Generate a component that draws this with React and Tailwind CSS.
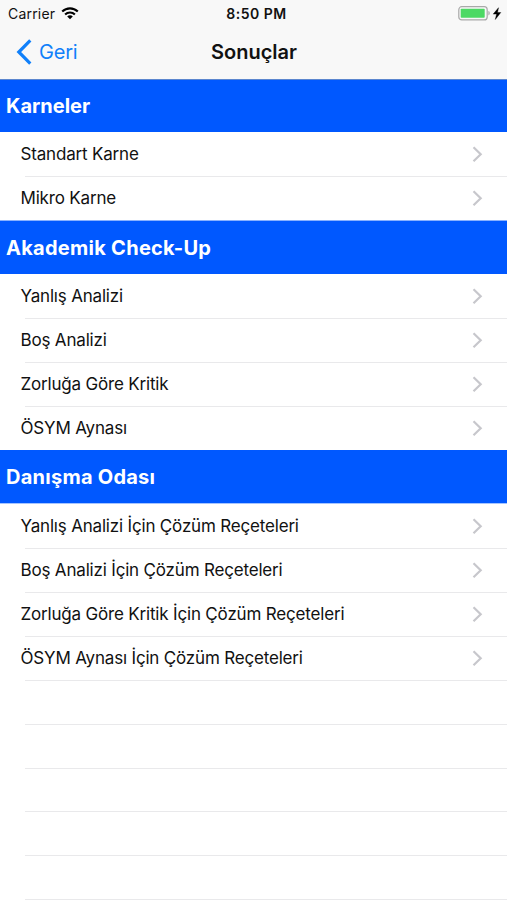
const sections = [
  {
    title: "Karneler",
    head: "h-[53px] border-t border-t-[#5b86cf]",
    heading: "tracking-normal",
    rows: ["Standart Karne", "Mikro Karne"],
  },
  {
    title: "Akademik Check-Up",
    head: "h-[54px] border-t border-t-[#8ab2ff]",
    heading: "tracking-[0.27px]",
    rows: ["Yanlış Analizi", "Boş Analizi", "Zorluğa Göre Kritik", "ÖSYM Aynası"],
  },
  {
    title: "Danışma Odası",
    head: "h-[54px] border-b border-b-[#a6c5ff]",
    heading: "tracking-[0.25px] pt-px",
    rows: [
      "Yanlış Analizi İçin Çözüm Reçeteleri",
      "Boş Analizi İçin Çözüm Reçeteleri",
      "Zorluğa Göre Kritik İçin Çözüm Reçeteleri",
      "ÖSYM Aynası İçin Çözüm Reçeteleri",
    ],
  },
];

function WifiIcon() {
  return (
    <svg className="h-[13px] w-[18px]" viewBox="0 0 18 13" fill="none" stroke="#000" strokeWidth="2.1">
      <path d="M1.2 4.6C5.6 .3 12.4 .3 16.8 4.6" />
      <path d="M4.1 7.5C6.9 4.8 11.1 4.8 13.9 7.5" />
      <path d="M6.2 9.4C7.8 7.8 10.2 7.8 11.8 9.4L9 12.2Z" fill="#000" stroke="none" />
    </svg>
  );
}

function BatteryIcon() {
  return (
    <svg className="h-[15px] w-[44px]" viewBox="0 0 44 15">
      <rect x=".8" y=".7" width="28.4" height="13.2" rx="3" fill="#f8f8f8" stroke="#a9a9a9" strokeWidth="1.2" />
      <rect x="2.7" y="2.7" width="24" height="9" rx=".8" fill="#4cd964" />
      <path d="M30.4 5.1C32.2 5.7 32.2 8.9 30.4 9.5Z" fill="#a9a9a9" />
      <path d="M40.5 1.7L35.2 8.1H38.6L37.3 13.5L42.8 6.5H39.5Z" fill="#000" stroke="#000" strokeWidth=".4" />
    </svg>
  );
}

function Chevron() {
  return (
    <svg className="h-[17px] w-[11px]" viewBox="0 0 11 17" fill="none" stroke="#c7c7cc" strokeWidth="2.2">
      <path d="M1.5 1.2L8.7 8.2L1.5 15.2" />
    </svg>
  );
}

function Row({ label, last }) {
  return (
    <div className="relative flex h-11 items-center justify-between pr-6 pl-[20.5px]">
      <span className="text-[17px] leading-5 tracking-[-0.18px] whitespace-nowrap">{label}</span>
      <Chevron />
      {!last && <div className="absolute right-0 bottom-[-1px] left-[25px] h-px bg-[#e9e9eb]" />}
    </div>
  );
}

function EmptyRow() {
  return (
    <div className="relative h-[43.8px]">
      <div className="absolute right-0 bottom-[-1px] left-[25px] h-px bg-[#e9e9eb]" />
    </div>
  );
}

export default function App() {
  return (
    <div className="h-[900px] w-[507px] overflow-hidden bg-white font-['Inter','Liberation_Sans',sans-serif] text-[#111]">
      <header className="h-[79px] bg-[#f8f8f8]">
        <div className="grid h-[27px] grid-cols-3 items-center pr-[5px] pl-2 text-[14px]">
          <div className="flex items-center gap-[6px]">
            <span className="tracking-[0.2px]">Carrier</span>
            <WifiIcon />
          </div>
          <span className="pl-[3px] text-center font-semibold tracking-[0.5px]">8:50 PM</span>
          <div className="flex justify-end">
            <BatteryIcon />
          </div>
        </div>
        <div className="grid h-[50px] grid-cols-3 items-center pr-4 pl-4 text-[20px]">
          <div className="flex items-center gap-[7px] text-[#1080fa]">
            <svg className="h-[26px] w-4" viewBox="0 0 16 26" fill="none" stroke="currentColor" strokeWidth="3.2">
              <path d="M14.3 1.4L2.8 13L14.3 24.6" />
            </svg>
            <span className="tracking-[-0.2px]">Geri</span>
          </div>
          <h1 className="pl-px text-center font-semibold">Sonuçlar</h1>
        </div>
      </header>
      {sections.map((s, i) => (
        <section key={s.title}>
          <div className={`flex items-center bg-[#0058ff] pl-1.5 ${s.head}`}>
            <h2 className={`text-[20px] font-bold text-white ${s.heading}`}>{s.title}</h2>
          </div>
          {s.rows.map((r, j) => (
            <Row key={r} label={r} last={i < 2 && j === s.rows.length - 1} />
          ))}
        </section>
      ))}
      {[0, 1, 2, 3, 4].map((n) => (
        <EmptyRow key={n} />
      ))}
    </div>
  );
}
